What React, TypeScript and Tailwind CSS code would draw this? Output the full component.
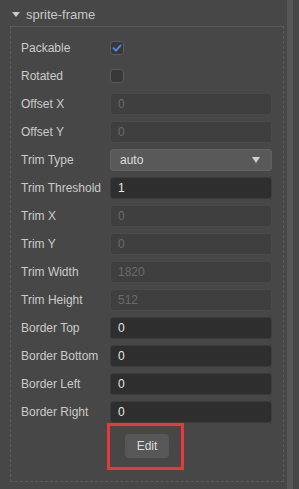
type Row = {
  label: string;
  kind: "check" | "disabled" | "input" | "select";
  value?: string;
  checked?: boolean;
};

const rows: Row[] = [
  { label: "Packable", kind: "check", checked: true },
  { label: "Rotated", kind: "check", checked: false },
  { label: "Offset X", kind: "disabled", value: "0" },
  { label: "Offset Y", kind: "disabled", value: "0" },
  { label: "Trim Type", kind: "select", value: "auto" },
  { label: "Trim Threshold", kind: "input", value: "1" },
  { label: "Trim X", kind: "disabled", value: "0" },
  { label: "Trim Y", kind: "disabled", value: "0" },
  { label: "Trim Width", kind: "disabled", value: "1820" },
  { label: "Trim Height", kind: "disabled", value: "512" },
  { label: "Border Top", kind: "input", value: "0" },
  { label: "Border Bottom", kind: "input", value: "0" },
  { label: "Border Left", kind: "input", value: "0" },
  { label: "Border Right", kind: "input", value: "0" },
];

function Field({ row }: { row: Row }) {
  if (row.kind === "check") {
    return (
      <div className="flex h-[22px] items-center">
        <div className="flex h-[14px] w-[14px] items-center justify-center rounded-[3px] border border-[#5c5c5c] bg-[#383838]">
          {row.checked && (
            <svg width="10" height="10" viewBox="0 0 10 10" fill="none">
              <path d="M1.5 5.2 4 7.6 8.6 2.4" stroke="#4b8cf5" strokeWidth="1.8" strokeLinecap="round" strokeLinejoin="round" />
            </svg>
          )}
        </div>
      </div>
    );
  }
  if (row.kind === "select") {
    return (
      <div className="flex h-[22px] w-[162px] items-center justify-between rounded-[3px] border border-[#616161] bg-[#595959] pl-[9px] pr-[11px] text-[12px] text-[#dcdcdc]">
        <span>{row.value}</span>
        <svg width="8" height="6" viewBox="0 0 8 6">
          <path d="M0 0h8L4 6z" fill="#d0d0d0" />
        </svg>
      </div>
    );
  }
  const disabled = row.kind === "disabled";
  return (
    <div
      className={
        disabled
          ? "flex h-[22px] w-[162px] items-center rounded-[3px] border border-[#4a4a4a] bg-[#3f3f3f] pl-[7px] text-[12px] text-[#6b6b6b]"
          : "flex h-[22px] w-[162px] items-center rounded-[3px] border border-[#3c3c3c] bg-[#2e2e2e] pl-[7px] text-[12px] text-[#e6e6e6]"
      }
    >
      {row.value}
    </div>
  );
}

export default function App() {
  return (
    <div
      className="flex h-[489px] w-[299px] overflow-hidden bg-[#474747]"
      style={{ fontFamily: '"Liberation Sans", Arial, sans-serif' }}
    >
      <div className="flex w-[287px] flex-col">
        <div className="flex h-[26px] items-center pl-[12px] pt-[3px]">
          <svg width="8" height="5" viewBox="0 0 8 5" className="mr-[6px]">
            <path d="M0 0h8L4 5z" fill="#c8c8c8" />
          </svg>
          <span className="text-[13px] text-[#c6c6c6]">sprite-frame</span>
        </div>
        <div className="ml-[10px] mr-[3px] flex h-[456px] flex-col border border-dashed border-[#5c5c5c] border-t-[#585858] pt-[10px] [border-top-style:solid]">
          <div className="flex flex-col gap-[6px] pl-[10px]">
            {rows.map((r) => (
              <div key={r.label} className="flex items-center">
                <div className="w-[89px] text-[12px] text-[#cbcbcb]">{r.label}</div>
                <Field row={r} />
              </div>
            ))}
          </div>
          <div className="ml-[96px] flex h-[47px] w-[77px] items-start border-[3px] border-[#e8383b] pl-[15px] pt-[8px]">
            <div className="flex h-[24px] w-[44px] items-center justify-center rounded-[4px] bg-[#575757] text-[12px] text-[#dedede]">
              Edit
            </div>
          </div>
        </div>
      </div>
      <div className="h-full w-[6px] bg-[#575757]" />
    </div>
  );
}
